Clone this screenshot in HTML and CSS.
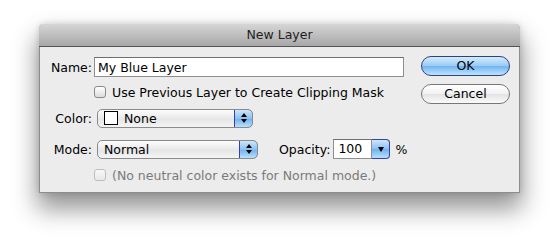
FILE: index.html
```html
<!DOCTYPE html>
<html>
    <head>
        <meta charset="UTF-8">
        <title>New Layer</title>
        <link rel="stylesheet" href="styles.css">
    </head>
    <body>
        <div class="dialog">
            <div class="titlebar">New Layer</div>
            <div class="content">
                <div class="fields">
                    <div class="row row_name">
                        <label class="lbl" for="layer_name">Name:</label>
                        <input id="layer_name" class="textbox" value="My Blue Layer">
                    </div>
                    <div class="row row_clip">
                        <span class="lbl"></span>
                        <span class="check"></span>
                        <span class="check_text">Use Previous Layer to Create Clipping Mask</span>
                    </div>
                    <div class="row row_color">
                        <span class="lbl">Color:</span>
                        <div class="popup popup_color">
                            <span class="swatch"></span>
                            <span class="popup_text">None</span>
                            <span class="arrows">
                                <svg width="8" height="12" viewBox="0 0 8 12"><path d="M4 1 L7 5 L1 5 Z M1 7 L7 7 L4 11 Z" fill="#000"/></svg>
                            </span>
                        </div>
                    </div>
                    <div class="row row_mode">
                        <span class="lbl">Mode:</span>
                        <div class="popup popup_mode">
                            <span class="popup_text">Normal</span>
                            <span class="arrows">
                                <svg width="8" height="12" viewBox="0 0 8 12"><path d="M4 1 L7 5 L1 5 Z M1 7 L7 7 L4 11 Z" fill="#000"/></svg>
                            </span>
                        </div>
                        <span class="opacity_lbl">Opacity:</span>
                        <div class="combo">
                            <span class="combo_text">100</span>
                            <span class="combo_arrow">
                                <svg width="8" height="8" viewBox="0 0 8 8"><path d="M1 2 L7 2 L4 7 Z" fill="#000"/></svg>
                            </span>
                        </div>
                        <span class="pct">%</span>
                    </div>
                    <div class="row row_neutral">
                        <span class="lbl"></span>
                        <span class="check check_off"></span>
                        <span class="check_text dim">(No neutral color exists for Normal mode.)</span>
                    </div>
                </div>
                <div class="buttons">
                    <div class="btn btn_ok">OK</div>
                    <div class="btn">Cancel</div>
                </div>
            </div>
        </div>
    </body>
</html>
```

FILE: styles.css
```css
html {
    height : 248px;
    background : #fff;
}
body {
    height : 248px;
    box-sizing : border-box;
    margin : 0;
    padding : 24px 0 0 39px;
    font-family : "DejaVu Sans", sans-serif;
    font-size : 12.5px;
    color : #000;
    overflow : hidden;
}
.dialog {
    width : 481px;
    height : 169px;
    box-sizing : border-box;
    background : #ececec;
    border : 1px solid #8d8d8d;
    border-top : none;
    border-radius : 5px 5px 0 0;
    box-shadow : 0 14px 24px 2px rgba(0, 0, 0, 0.42), 0 0 6px rgba(0, 0, 0, 0.15);
}
.titlebar {
    height : 22px;
    line-height : 22px;
    text-align : center;
    font-size : 12.5px;
    color : #1e1e1e;
    background : linear-gradient(#d6d6d6, #a7a7a7);
    border-bottom : 1px solid #555;
    border-radius : 5px 5px 0 0;
    margin : 0 -1px;
}
.content {
    display : flex;
}
.fields {
    width : 381px;
    padding-top : 10px;
}
.row {
    display : flex;
    align-items : center;
    height : 20px;
}
.row_clip { margin-top : 5px; }
.row_color { margin-top : 6px; }
.row_mode { margin-top : 11px; }
.row_neutral { margin-top : 6px; }
.lbl {
    width : 54px;
    flex : none;
    text-align : right;
    padding-right : 2px;
    box-sizing : border-box;
}
.textbox {
    width : 310px;
    height : 20px;
    box-sizing : border-box;
    margin : 0;
    padding : 0 0 0 3px;
    border : 1px solid #8e8e8e;
    border-top-color : #6f6f6f;
    font-family : inherit;
    font-size : 12.5px;
    color : #000;
    background : #fff;
    outline : none;
}
.check {
    width : 12px;
    height : 12px;
    box-sizing : border-box;
    border : 1px solid #8a8a8a;
    border-radius : 3px;
    background : linear-gradient(#fff, #dcdcdc);
    margin-right : 6px;
}
.check_off {
    border-color : #bdbdbd;
    background : linear-gradient(#f8f8f8, #e8e8e8);
}
.dim {
    color : #7a7a7a;
}
.popup {
    display : flex;
    align-items : center;
    height : 19px;
    box-sizing : border-box;
    margin-left : 3px;
    border : 1px solid #8a8a8a;
    border-radius : 5px;
    background : linear-gradient(#fdfdfd, #e6e6e6 55%, #f4f4f4);
    overflow : hidden;
}
.popup_color { width : 156px; }
.popup_mode { width : 161px; }
.popup_text {
    flex : 1;
    padding-left : 6px;
}
.swatch {
    width : 14px;
    height : 14px;
    box-sizing : border-box;
    border : 1px solid #000;
    background : #fff;
    margin-left : 6px;
}
.arrows {
    width : 19px;
    height : 19px;
    margin : -1px -1px -1px 0;
    box-sizing : border-box;
    display : flex;
    align-items : center;
    justify-content : center;
    border : 1px solid #3c3f9c;
    border-radius : 0 5px 5px 0;
    background : linear-gradient(#cde6fb, #89c1f3 50%, #6fb0ee 51%, #b9e0fd);
}
.opacity_lbl {
    margin-left : 21px;
    margin-right : 3px;
}
.combo {
    display : flex;
    height : 20px;
}
.combo_text {
    width : 39px;
    box-sizing : border-box;
    padding-left : 4px;
    line-height : 18px;
    background : #fff;
    border : 1px solid #8e8e8e;
    border-top-color : #6f6f6f;
}
.combo_arrow {
    width : 18px;
    box-sizing : border-box;
    display : flex;
    align-items : center;
    justify-content : center;
    border : 1px solid #3c3f9c;
    border-left : none;
    border-radius : 0 4px 4px 0;
    background : linear-gradient(#cde6fb, #89c1f3 50%, #6fb0ee 51%, #b9e0fd);
}
.pct {
    margin-left : 5px;
}
.buttons {
    padding-top : 9px;
    display : flex;
    flex-direction : column;
    gap : 8px;
}
.btn {
    width : 89px;
    height : 20px;
    box-sizing : border-box;
    text-align : center;
    line-height : 18px;
    border : 1px solid #777;
    border-radius : 10px;
    background : linear-gradient(#fff, #f1f1f1 50%, #e3e3e3 51%, #fafafa);
}
.btn_ok {
    border-color : #30427a;
    background : linear-gradient(#d3ebfd, #98cbf6 50%, #72b4f1 51%, #bde4ff);
}
```
